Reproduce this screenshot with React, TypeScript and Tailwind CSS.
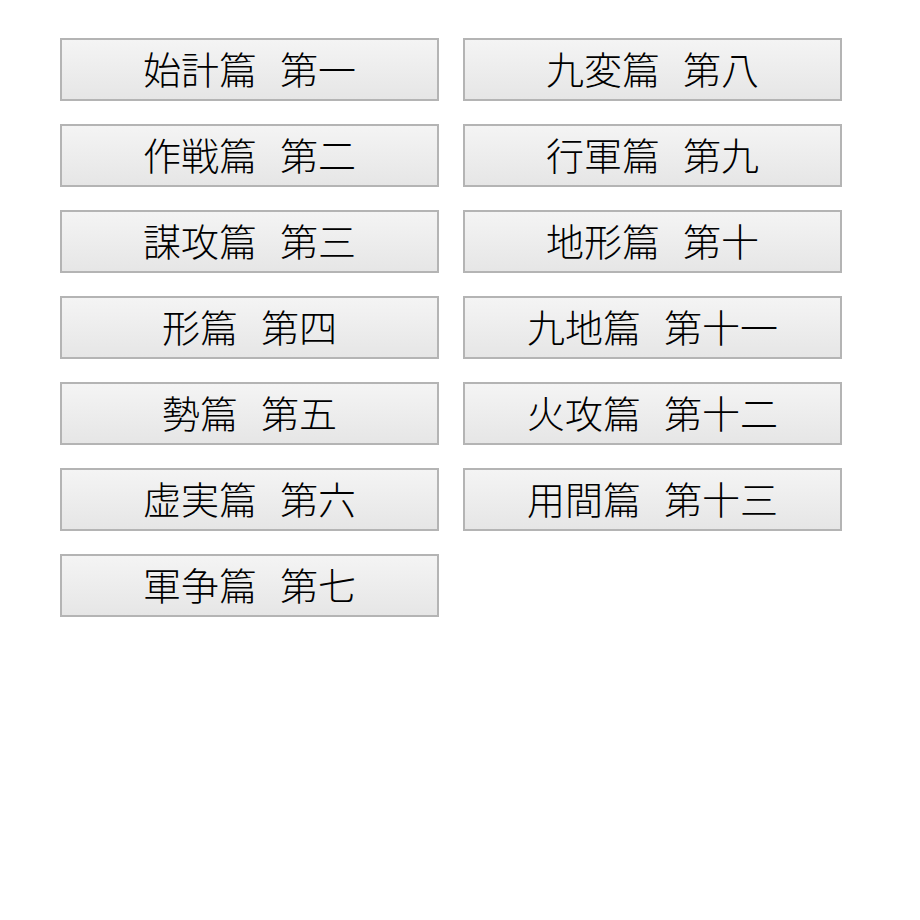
import React from 'react';

// 孫子兵法 — chapter buttons, two columns
const LEFT: [string, string][] = [
  ['始計篇', '第一'],
  ['作戦篇', '第二'],
  ['謀攻篇', '第三'],
  ['形篇', '第四'],
  ['勢篇', '第五'],
  ['虚実篇', '第六'],
  ['軍争篇', '第七'],
];

const RIGHT: [string, string][] = [
  ['九変篇', '第八'],
  ['行軍篇', '第九'],
  ['地形篇', '第十'],
  ['九地篇', '第十一'],
  ['火攻篇', '第十二'],
  ['用間篇', '第十三'],
];

const ChapterButton: React.FC<{ title: string; num: string }> = ({ title, num }) => (
  <button
    type="button"
    className="w-[379px] h-[63px] flex items-center justify-center gap-[23px] pb-[4px] border-2 border-[#b4b4b4] bg-gradient-to-b from-[#f4f4f4] to-[#e6e6e6] text-[38px] leading-none text-black font-light"
  >
    <span>{title}</span>
    <span>{num}</span>
  </button>
);

export default function App() {
  return (
    <div
      className="w-[920px] h-[920px] bg-white pt-[38px] pl-[60px]"
      style={{ fontFamily: '"Noto Sans CJK JP", "Noto Sans CJK SC", sans-serif' }}
    >
      <div className="flex gap-[24px]">
        <div className="flex flex-col gap-[23px]">
          {LEFT.map(([t, n]) => (
            <ChapterButton key={t} title={t} num={n} />
          ))}
        </div>
        <div className="flex flex-col gap-[23px]">
          {RIGHT.map(([t, n]) => (
            <ChapterButton key={t} title={t} num={n} />
          ))}
        </div>
      </div>
    </div>
  );
}
